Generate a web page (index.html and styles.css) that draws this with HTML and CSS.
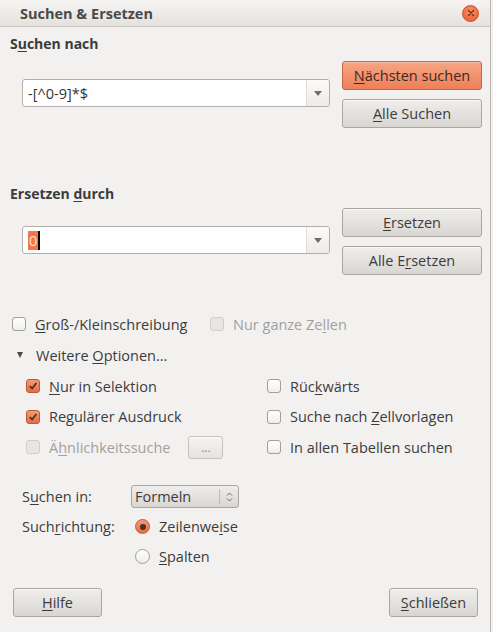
FILE: index.html
```html
<!DOCTYPE html>
<html lang="de">
<head>
<meta charset="utf-8">
<title>Suchen &amp; Ersetzen</title>
<link rel="stylesheet" href="styles.css">
</head>
<body>
<div class="window">
  <div class="titlebar">
    <span class="title">Suchen &amp; Ersetzen</span>
    <span class="close"><svg width="8" height="8" viewBox="0 0 8 8"><path d="M1.5 1.5 L6.5 6.5 M6.5 1.5 L1.5 6.5" stroke="#7a2a10" stroke-width="1.3" stroke-linecap="round"/></svg></span>
  </div>

  <div class="content">
    <div class="heading h-find">S<span class="mn">u</span>chen nach</div>
    <div class="io-row r-find">
      <div class="combo">
        <div class="combo-text">-[^0-9]*$</div>
        <div class="combo-btn"><span class="tri"></span></div>
      </div>
      <div class="btn-col">
        <button class="btn primary"><span class="mn">N</span>ächsten suchen</button>
        <button class="btn"><span class="mn">A</span>lle Suchen</button>
      </div>
    </div>

    <div class="heading h-repl">Ersetzen <span class="mn">d</span>urch</div>
    <div class="io-row r-repl">
      <div class="combo">
        <div class="combo-text"><span class="sel">0</span><span class="caret"></span></div>
        <div class="combo-btn"><span class="tri"></span></div>
      </div>
      <div class="btn-col">
        <button class="btn"><span class="mn">E</span>rsetzen</button>
        <button class="btn">Alle E<span class="mn">r</span>setzen</button>
      </div>
    </div>

    <div class="row r-case">
      <label class="check c-case"><span class="box"></span><span><span class="mn">G</span>roß-/Kleinschreibung</span></label>
      <label class="check disabled c-whole"><span class="box"></span><span>Nur ganze Ze<span class="mn">l</span>len</span></label>
    </div>

    <div class="row r-more">
      <span class="expander"></span>
      <span>Weitere <span class="mn">O</span>ptionen...</span>
    </div>

    <div class="opts">
      <div class="row">
        <label class="check on"><span class="box"><svg width="14" height="14" viewBox="0 0 14 14"><path d="M3.2 7.2 L6 10 L11 3.6" fill="none" stroke="#4a3129" stroke-width="2"/></svg></span><span><span class="mn">N</span>ur in Selektion</span></label>
        <label class="check"><span class="box"></span><span>Rüc<span class="mn">k</span>wärts</span></label>
      </div>
      <div class="row">
        <label class="check on"><span class="box"><svg width="14" height="14" viewBox="0 0 14 14"><path d="M3.2 7.2 L6 10 L11 3.6" fill="none" stroke="#4a3129" stroke-width="2"/></svg></span><span>Re<span class="mn">g</span>ulärer Ausdruck</span></label>
        <label class="check"><span class="box"></span><span>Suche nach <span class="mn">Z</span>ellvorlagen</span></label>
      </div>
      <div class="row">
        <div class="sim">
          <label class="check disabled"><span class="box"></span><span>Ä<span class="mn">h</span>nlichkeitssuche</span></label>
          <button class="btn small">...</button>
        </div>
        <label class="check"><span class="box"></span><span>In allen Tabellen suchen</span></label>
      </div>
    </div>

    <div class="search-grid">
      <div class="glabel">S<span class="mn">u</span>chen in:</div>
      <div class="spin"><span class="spin-text">Formeln</span><span class="spin-arrows"><svg width="7" height="12" viewBox="0 0 7 12"><path d="M1 4.5 L3.5 2 L6 4.5 M1 7.5 L3.5 10 L6 7.5" fill="none" stroke="#6a6a6a" stroke-width="1"/></svg></span></div>
      <div class="glabel">Such<span class="mn">r</span>ichtung:</div>
      <label class="radio on"><span class="circle"><span class="dot"></span></span><span>Zeilenwe<span class="mn">i</span>se</span></label>
      <div></div>
      <label class="radio"><span class="circle"></span><span><span class="mn">S</span>palten</span></label>
    </div>

    <div class="footer">
      <button class="btn foot"><span class="mn">H</span>ilfe</button>
      <button class="btn foot"><span class="mn">S</span>chließen</button>
    </div>
  </div>
</div>
</body>
</html>
```

FILE: styles.css
```css
* { box-sizing: border-box; }
html, body { margin: 0; padding: 0; }
body {
  width: 493px;
  height: 632px;
  background: #f2f1f0;
  font-family: "Open Sans", "DejaVu Sans", sans-serif;
  font-size: 14.5px;
  color: #3c3c3c;
  overflow: hidden;
}
.window {
  width: 491px;
  height: 632px;
  border-right: 1px solid #b9b5b0;
  background: #f2f1f0;
}
.titlebar {
  height: 27px;
  display: flex;
  align-items: center;
  justify-content: space-between;
  padding: 0 11px 0 20px;
  background: linear-gradient(#f6f5f3, #e4e1dd);
  border-bottom: 1px solid #cbc7c2;
}
.title { font-weight: bold; font-size: 14.5px; color: #4a4a4a; }
.close {
  width: 17px; height: 17px;
  border-radius: 50%;
  background: radial-gradient(circle at 50% 35%, #f8906a, #e2582c);
  border: 1px solid #c8522c;
  display: flex; align-items: center; justify-content: center;
}
.mn { text-decoration: underline; text-underline-offset: 2px; }
.heading { font-weight: bold; font-size: 14px; padding-left: 10px; line-height: 18px; }
.h-find { margin-top: 8px; }
.h-repl { margin-top: 57px; }
.io-row { display: flex; align-items: flex-start; }
.r-find { margin-top: 8px; }
.r-repl { margin-top: 5px; }
.combo {
  margin-left: 22px;
  margin-top: 18px;
  width: 308px;
  height: 28px;
  display: flex;
  background: #fff;
  border: 1px solid #b3aea9;
  border-radius: 3px;
}
.combo-text { flex: 1; display: flex; align-items: center; padding-left: 5px; font-size: 14.5px; color: #333; }
.sel { background: #f07746; color: #fbe3d8; padding: 0 1px; line-height: 19px; }
.caret { width: 2px; height: 19px; background: #000; }
.combo-btn {
  width: 23px;
  border-left: 1px solid #dedbd7;
  background: linear-gradient(#fbfaf9, #eeece9);
  border-radius: 0 3px 3px 0;
  display: flex; align-items: center; justify-content: center;
}
.tri { width: 0; height: 0; border-left: 4px solid transparent; border-right: 4px solid transparent; border-top: 5px solid #6d6d6d; }
.btn-col { margin-left: 12px; display: flex; flex-direction: column; gap: 9px; }
.btn {
  font-family: inherit;
  font-size: 14.5px;
  color: #3c3c3c;
  width: 140px;
  height: 29px;
  border: 1px solid #a9a59f;
  border-radius: 3px;
  background: linear-gradient(#efeeec, #d9d6d2);
  padding: 0;
  box-shadow: inset 0 1px 0 #fbfaf9;
}
.btn.primary {
  background: linear-gradient(#f7a585, #ee7f58);
  border-color: #c46544;
  box-shadow: inset 0 1px 0 #fbbfa7;
  color: #3a2a24;
}
.row { display: flex; align-items: center; height: 30px; }
.r-case { margin-top: 34px; padding-left: 12px; }
.c-case { width: 198px; }
.check { display: flex; align-items: center; gap: 9px; }
.box {
  width: 14px; height: 14px;
  border: 1px solid #a39f9a;
  border-radius: 3px;
  background: linear-gradient(#fefefe, #f0efed);
  display: flex; align-items: center; justify-content: center;
}
.check.on .box { background: linear-gradient(#f49a75, #e86d42); border-color: #c05a36; }
.check.disabled { color: #a3a09c; }
.check.disabled .box { background: #e8e6e3; border-color: #d2cfcb; }
.r-more { margin-top: 1px; padding-left: 17px; gap: 13px; }
.expander { width: 0; height: 0; border-left: 3.5px solid transparent; border-right: 3.5px solid transparent; border-top: 6px solid #4a4a4a; }
.opts { padding-left: 26px; margin-top: 1px; }
.opts .row > :first-child { width: 241px; }
.opts .row { height: 30.5px; }
.sim { display: flex; align-items: center; gap: 18px; }
.btn.small { width: 35px; height: 23px; color: #8a8784; font-size: 12px; border-color: #c6c2bd; background: linear-gradient(#f5f4f2, #e6e3e0); }
.search-grid {
  margin-top: 19px;
  padding-left: 22px;
  display: grid;
  grid-template-columns: 109px auto;
  grid-auto-rows: 30px;
  align-items: center;
}
.spin {
  width: 108px; height: 23px;
  border: 1px solid #a9a59f;
  border-radius: 3px;
  background: linear-gradient(#efeeec, #d9d6d2);
  display: flex; align-items: center; justify-content: space-between;
  padding-left: 3px;
}
.spin-arrows { width: 19px; height: 15px; border-left: 1px solid #bdb9b4; display: flex; align-items: center; justify-content: center; }
.radio { display: flex; align-items: center; gap: 9px; padding-left: 4px; }
.circle {
  width: 15px; height: 15px; border-radius: 50%;
  border: 1px solid #a39f9a;
  background: linear-gradient(#fefefe, #eeedeb);
  display: flex; align-items: center; justify-content: center;
}
.radio.on .circle { background: linear-gradient(#f49a75, #e86d42); border-color: #c05a36; }
.dot { width: 6px; height: 6px; border-radius: 50%; background: #4a3129; }
.footer { display: flex; justify-content: space-between; margin-top: 16px; padding: 0 12px 0 13px; }
.btn.foot { width: 89px; }
```
